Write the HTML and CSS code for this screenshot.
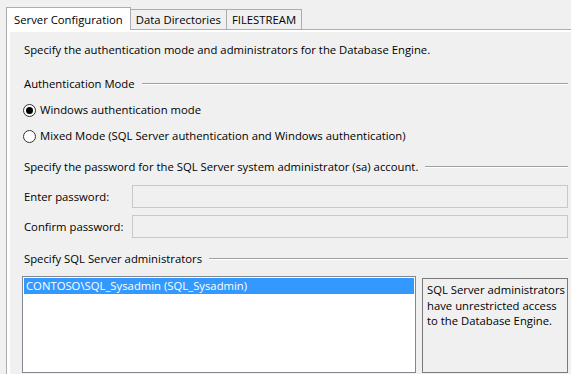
FILE: index.html
```html
<!DOCTYPE html>
<html lang="en">
<head>
    <meta charset="UTF-8">
    <title>Server Configuration</title>
    <link rel="stylesheet" href="styles.css">
</head>
<body>
    <div class="tabs">
        <div class="tab active">Server Configuration</div>
        <div class="tab">Data Directories</div>
        <div class="tab">FILESTREAM</div>
    </div>

    <div class="page">
        <div class="page-inner">
            <p class="intro">Specify the authentication mode and administrators for the Database Engine.</p>

            <div class="group-title auth-title"><span>Authentication Mode</span></div>
            <label class="radio checked"><span class="dot"></span>Windows authentication mode</label>
            <label class="radio"><span class="dot"></span>Mixed Mode (SQL Server authentication and Windows authentication)</label>

            <div class="group-title sa-title"><span>Specify the password for the SQL Server system administrator (sa) account.</span></div>
            <div class="field first">
                <span class="field-label">Enter password:</span>
                <div class="input"></div>
            </div>
            <div class="field">
                <span class="field-label">Confirm password:</span>
                <div class="input"></div>
            </div>

            <div class="group-title admin-title"><span>Specify SQL Server administrators</span></div>
            <div class="admins">
                <div class="listbox">
                    <div class="list-item selected">CONTOSO\SQL_Sysadmin (SQL_Sysadmin)</div>
                </div>
                <div class="info">SQL Server administrators have unrestricted access to the Database Engine.</div>
            </div>
        </div>
    </div>
</body>
</html>
```

FILE: styles.css
```css
* {
    margin: 0;
    padding: 0;
    box-sizing: border-box;
}

body {
    font-family: "Open Sans", "Noto Sans", sans-serif;
    font-size: 11.3px;
    color: #000;
    background: #f0f0f0;
    width: 571px;
    height: 374px;
    overflow: hidden;
}

.tabs {
    display: flex;
    align-items: flex-end;
    padding: 7px 0 0 6px;
}

.tab {
    height: 20px;
    line-height: 20px;
    padding: 0 5px;
    border: 1px solid #adadad;
    border-bottom: none;
    background: #f0f0f0;
    margin-left: -1px;
}

.tab.active {
    height: 23px;
    line-height: 23px;
    padding: 0 7px;
    margin-left: 0;
    margin-bottom: -1px;
    background: #fff;
    position: relative;
    z-index: 1;
}

.page {
    margin-left: 6px;
    width: 565px;
    height: 345px;
    border: 1px solid #adadad;
    border-right: none;
    border-bottom: none;
    background: #fff;
    padding: 2px 0 0 3px;
}

.page-inner {
    height: 100%;
    background: #f0f0f0;
    padding: 10px 0 0 14px;
}

.page-inner > * {
    width: 544px;
}

.intro {
    line-height: 16px;
}

.group-title {
    display: flex;
    align-items: center;
    gap: 7px;
    height: 16px;
    line-height: 16px;
}

.group-title::after {
    content: "";
    flex: 1;
    border-top: 1px solid #a0a0a0;
    border-bottom: 1px solid #fff;
}

.auth-title {
    margin-top: 18px;
}

.sa-title {
    margin-top: 15px;
}

.admin-title {
    margin-top: 13px;
}

.radio {
    display: flex;
    align-items: center;
    height: 16px;
    line-height: 16px;
    margin-top: 10px;
}

.dot {
    width: 13px;
    height: 13px;
    border: 1px solid #333;
    border-radius: 50%;
    background: #fff;
    margin: 0 4px 0 -1px;
    display: flex;
    align-items: center;
    justify-content: center;
}

.radio.checked .dot::after {
    content: "";
    width: 7px;
    height: 7px;
    border-radius: 50%;
    background: #000;
}

.field {
    display: flex;
    align-items: center;
    margin-top: 7px;
}

.field.first {
    margin-top: 10px;
}

.field-label {
    width: 108px;
}

.input {
    flex: 1;
    height: 23px;
    border: 1px solid #c8c8c8;
    background: #f0f0f0;
}

.admins {
    display: flex;
    align-items: flex-start;
    gap: 6px;
    margin-top: 9px;
    margin-left: -2px;
    width: 546px;
}

.listbox {
    width: 394px;
    height: 97px;
    border: 1px solid #828790;
    background: #fff;
    padding: 1px;
}

.list-item {
    height: 16px;
    line-height: 15px;
    padding-left: 2px;
}

.list-item.selected {
    background: #3399ff;
    color: #fff;
}

.info {
    flex: 1;
    height: 95px;
    margin-top: 2px;
    border: 1px solid #7a7a7a;
    padding: 3px 1px 3px 4px;
    line-height: 15.5px;
}
```
